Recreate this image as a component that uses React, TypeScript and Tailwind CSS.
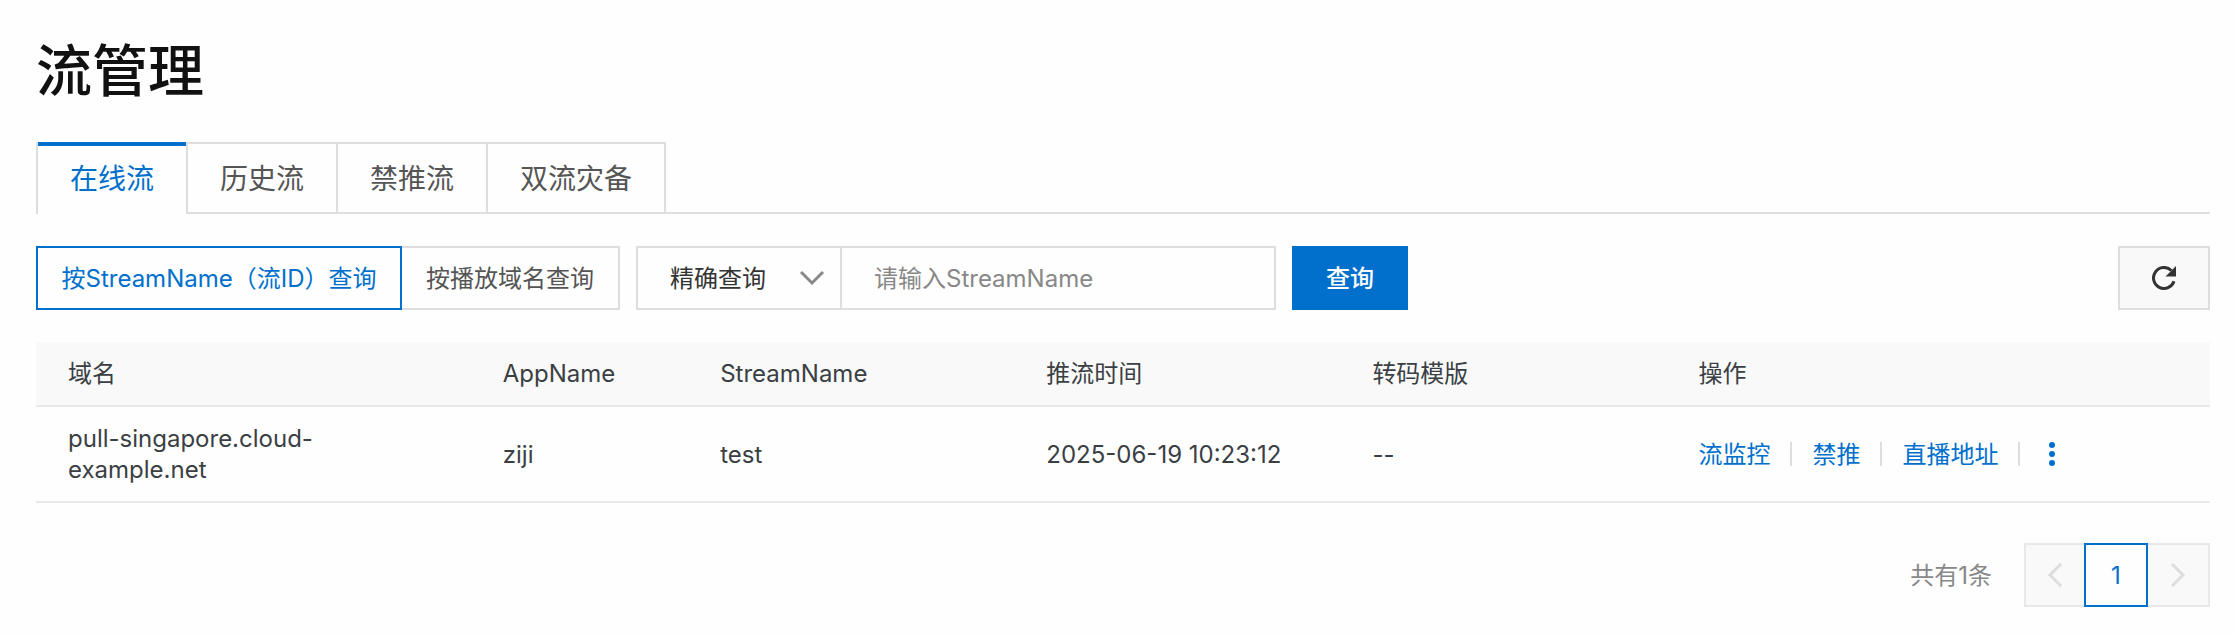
import { useState } from "react";

const tabs = ["在线流", "历史流", "禁推流", "双流灾备"];

const modes = [
  { label: "按StreamName（流ID）查询", width: "w-[366px]" },
  { label: "按播放域名查询", width: "w-[218px]" },
];

const columns = [
  { title: "域名", width: "w-[20%]" },
  { title: "AppName", width: "w-[10%]" },
  { title: "StreamName", width: "w-[15%]" },
  { title: "推流时间", width: "w-[15%]" },
  { title: "转码模版", width: "w-[15%]" },
  { title: "操作", width: "w-[25%]" },
];

const streams = [
  {
    domain: "pull-singapore.cloud-example.net",
    app: "ziji",
    stream: "test",
    time: "2025-06-19 10:23:12",
    template: "--",
  },
];

const actions = ["流监控", "禁推", "直播地址"];

function Chevron({ className }: { className: string }) {
  return (
    <svg viewBox="0 0 24 24" fill="none" stroke="currentColor" strokeWidth="3" className={className} aria-hidden="true">
      <path d="M1 6 12 17 23 6" />
    </svg>
  );
}

function RefreshIcon() {
  return (
    <svg viewBox="0 0 24 24" className="w-6 h-6" aria-hidden="true">
      <path d="M22 15.2A10.5 10.5 0 1 1 19.4 4.5" fill="none" stroke="currentColor" strokeWidth="3" />
      <path d="M24 0v10.5H13.5z" fill="currentColor" />
    </svg>
  );
}

export default function App() {
  const [tab, setTab] = useState(0);
  const [mode, setMode] = useState(0);

  return (
    <div className="min-h-screen bg-[#fefefe] pl-9 pr-6 pt-9 pb-7 font-['Inter','Noto_Sans_CJK_SC',sans-serif] text-[24px] text-[#333]">
      <h1 className="text-[56px] leading-[70px] font-medium text-[#111]">流管理</h1>

      {/* Tabs */}
      <div role="tablist" className="mt-9 flex">
        {tabs.map((label, i) => (
          <button
            key={label}
            role="tab"
            aria-selected={tab === i}
            onClick={() => setTab(i)}
            className={`relative h-[72px] px-8 pt-0.5 text-[28px] border-r-2 border-[#dedede] ${i === 0 ? "border-l-2" : ""} ${
              tab === i ? "text-[#0070cc]" : "text-[#555] border-y-2"
            }`}
          >
            {tab === i && <span className="absolute inset-x-0 top-0 h-1 bg-[#0070cc]" />}
            {label}
          </button>
        ))}
        <div className="flex-1 border-b-2 border-[#dedede]" />
      </div>

      {/* Filters */}
      <div className="mt-8 flex h-16">
        <div className="flex">
          {modes.map((item, i) => (
            <button
              key={item.label}
              onClick={() => setMode(i)}
              className={`${item.width} pt-0.5 whitespace-nowrap border-2 ${
                mode === i ? "border-[#0070cc] text-[#0070cc]" : "border-[#dedede] text-[#555] border-l-0"
              }`}
            >
              {item.label}
            </button>
          ))}
        </div>
        <div className="ml-4 flex w-[640px] border-2 border-[#dedede]">
          <div className="relative w-[204px] border-r-2 border-[#dedede]">
            <select aria-label="查询方式" className="w-full h-full pl-8 pt-0.5 appearance-none bg-transparent outline-none">
              <option>精确查询</option>
              <option>模糊查询</option>
            </select>
            <Chevron className="absolute right-4 top-[18px] w-6 h-6 text-[#888] pointer-events-none" />
          </div>
          <input
            aria-label="StreamName"
            placeholder="请输入StreamName"
            className="flex-1 min-w-0 px-8 pt-0.5 bg-transparent outline-none placeholder:text-[#888]"
          />
        </div>
        <button className="ml-4 w-[116px] pt-0.5 bg-[#0070cc] text-white font-medium">查询</button>
        <button
          aria-label="刷新"
          className="ml-auto w-[92px] flex items-center justify-center border-2 border-[#dedede] bg-[#f9f9f9]"
        >
          <RefreshIcon />
        </button>
      </div>

      {/* Stream list */}
      <table className="mt-8 w-full table-fixed text-left leading-[31px] text-[#3a3f44]">
        <thead>
          <tr className="bg-[#f9f9f9] border-b-2 border-[#e8e8e8]">
            {columns.map((col) => (
              <th key={col.title} className={`${col.width} px-8 py-4 font-normal`}>
                {col.title}
              </th>
            ))}
          </tr>
        </thead>
        <tbody>
          {streams.map((row) => (
            <tr key={row.stream} className="border-b-2 border-[#e8e8e8]">
              <td className="px-8 py-4">{row.domain}</td>
              <td className="px-8 py-4">{row.app}</td>
              <td className="px-8 py-4">{row.stream}</td>
              <td className="px-8 py-4 whitespace-nowrap">{row.time}</td>
              <td className="px-8 py-4">{row.template}</td>
              <td className="px-8 py-4">
                <div className="flex items-center text-[#0070cc]">
                  {actions.map((action) => (
                    <span key={action} className="flex items-center">
                      <a href="#">{action}</a>
                      <span className="mx-5 w-0.5 h-6 bg-[#dedede]" />
                    </span>
                  ))}
                  <button aria-label="更多">
                    <svg viewBox="0 0 24 24" fill="currentColor" className="w-6 h-6" aria-hidden="true">
                      <circle cx="12" cy="3" r="3" />
                      <circle cx="12" cy="12" r="3" />
                      <circle cx="12" cy="21" r="3" />
                    </svg>
                  </button>
                </div>
              </td>
            </tr>
          ))}
        </tbody>
      </table>

      {/* Pagination */}
      <div className="mt-10 flex h-16 items-center justify-end">
        <span className="mr-8 pt-0.5 text-[#888]">共有1条</span>
        <button
          aria-label="上一页"
          disabled
          className="w-[60px] h-full flex items-center justify-center border-2 border-r-0 border-[#e8e8e8] bg-[#f9f9f9] text-[#ddd]"
        >
          <Chevron className="w-6 h-6 rotate-90" />
        </button>
        <button className="w-16 h-full pt-0.5 border-2 border-[#0070cc] text-[#0070cc]">1</button>
        <button
          aria-label="下一页"
          disabled
          className="w-[62px] h-full flex items-center justify-center border-2 border-l-0 border-[#e8e8e8] bg-[#f9f9f9] text-[#ddd]"
        >
          <Chevron className="w-6 h-6 -rotate-90" />
        </button>
      </div>
    </div>
  );
}
